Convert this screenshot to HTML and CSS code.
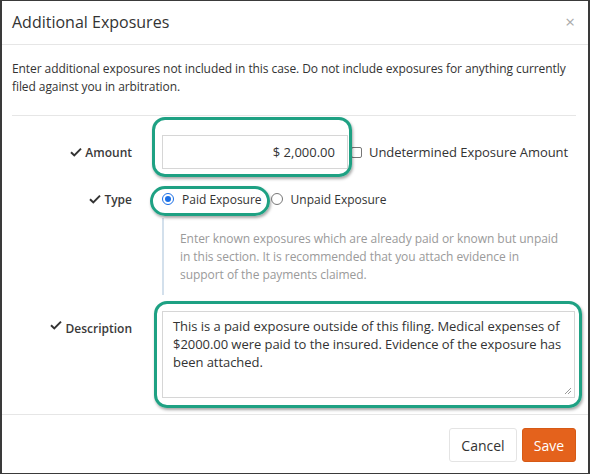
FILE: index.html
```html
<!DOCTYPE html>
<html>
<head>
<meta charset="utf-8">
<link rel="stylesheet" href="styles.css">
</head>
<body>
<div class="frame">
  <div class="header">
    <div class="title">Additional Exposures</div>
    <div class="close">×</div>
  </div>
  <div class="body">
    <p class="intro">Enter additional exposures not included in this case. Do not include exposures for anything currently filed against you in arbitration.</p>
    <div class="rule"></div>
    <div class="form">
      <div class="label row-amount"><svg class="check" viewBox="0 0 12 10"><path d="M1 5.2 L4.3 8.4 L11 1.6" fill="none" stroke="#333" stroke-width="2"/></svg>Amount</div>
      <div class="control row-amount">
        <span class="hl hl-amount"><span class="input">$ 2,000.00</span></span>
        <span class="checkbox"></span>
        <span class="cb-label">Undetermined Exposure Amount</span>
      </div>

      <div class="label row-type"><svg class="check" viewBox="0 0 12 10"><path d="M1 5.2 L4.3 8.4 L11 1.6" fill="none" stroke="#333" stroke-width="2"/></svg>Type</div>
      <div class="control row-type">
        <span class="hl hl-type"><span class="radio checked"></span><span class="radio-label">Paid Exposure</span></span>
        <span class="radio second"></span><span class="radio-label">Unpaid Exposure</span>
      </div>

      <div class="spacer"></div>
      <div class="help">Enter known exposures which are already paid or known but unpaid in this section. It is recommended that you attach evidence in support of the payments claimed.</div>

      <div class="label row-desc"><svg class="check" viewBox="0 0 12 10"><path d="M1 5.2 L4.3 8.4 L11 1.6" fill="none" stroke="#333" stroke-width="2"/></svg>Description</div>
      <div class="control row-desc">
        <span class="hl hl-desc"><span class="textarea">This is a paid exposure outside of this filing. Medical expenses of $2000.00 were paid to the insured. Evidence of the exposure has been attached.<svg class="grip" viewBox="0 0 8 8"><path d="M7 1 L1 7 M7 4 L4 7" stroke="#999" stroke-width="1"/></svg></span></span>
      </div>
    </div>
  </div>
  <div class="footer">
    <span class="btn cancel">Cancel</span>
    <span class="btn save">Save</span>
  </div>
</div>
</body>
</html>
```

FILE: styles.css
```css
html, body {
  margin: 0;
  padding: 0;
  background: #fff;
}
body {
  font-family: "Open Sans", "Noto Sans", sans-serif;
  color: #333;
}
.frame {
  width: 590px;
  height: 474px;
  box-sizing: border-box;
  border-style: solid;
  border-color: #3a3a3a;
  border-width: 1px 2px 1px 2px;
  display: flex;
  flex-direction: column;
  background: #fff;
}
.header {
  height: 44px;
  flex: none;
  border-bottom: 1px solid #e6e6e6;
  display: flex;
  align-items: center;
  justify-content: space-between;
  padding: 0 13px 2px 10px;
  box-sizing: border-box;
}
.title {
  font-size: 16px;
  color: #333;
}
.close {
  font-size: 17px;
  color: #aaa;
  line-height: 1;
}
.body {
  flex: 1;
  padding: 15px 12px 0 10px;
}
.intro {
  margin: 0;
  font-size: 12px;
  line-height: 18px;
  color: #333;
  letter-spacing: -0.08px;
}
.rule {
  height: 0;
  border-top: 1px solid #e6e6e6;
  margin-top: 19px;
}
.form {
  display: grid;
  grid-template-columns: 120px 1fr;
  column-gap: 30px;
  padding-top: 19px;
}
.label {
  display: flex;
  justify-content: flex-end;
  align-items: center;
  font-size: 12px;
  font-weight: 600;
  color: #3a3a3a;
}
.check {
  width: 12px;
  height: 10px;
  margin-right: 3px;
}
.control {
  display: flex;
  align-items: center;
  font-size: 13px;
}
.row-amount { height: 34px; }
.row-type { height: 20px; margin-top: 20px; }
.label.row-desc { align-items: flex-start; padding-top: 9px; }
.row-desc { margin-top: 16px; }

.hl {
  position: relative;
  display: inline-flex;
  align-items: center;
}
.hl::after {
  content: "";
  position: absolute;
  border: 3px solid #1ea183;
  border-radius: 13px;
  box-shadow: 1px 2px 3px rgba(0, 0, 0, 0.35);
  pointer-events: none;
}
.hl-amount::after { top: -18px; left: -10px; right: -4px; bottom: -8px; }
.hl-type::after { top: -5px; left: -12px; right: -8px; bottom: -8px; border-radius: 15px; }
.hl-desc::after { top: -10px; left: -8px; right: -7px; bottom: -10px; }

.input {
  box-sizing: border-box;
  width: 186px;
  height: 34px;
  border: 1px solid #d6d6d6;
  display: flex;
  align-items: center;
  justify-content: flex-end;
  padding-right: 12px;
  font-size: 13px;
  color: #333;
}
.checkbox {
  box-sizing: border-box;
  width: 11px;
  height: 11px;
  border: 1px solid #777;
  border-radius: 2px;
  margin-left: 3px;
  margin-right: 7px;
}
.cb-label {
  font-size: 13px;
  color: #333;
  letter-spacing: -0.05px;
}
.radio {
  box-sizing: border-box;
  width: 12px;
  height: 12px;
  border: 1px solid #777;
  border-radius: 50%;
  position: relative;
  flex: none;
}
.radio.checked {
  border-color: #1a6fe6;
}
.radio.checked::before {
  content: "";
  position: absolute;
  left: 2px;
  top: 2px;
  width: 6px;
  height: 6px;
  border-radius: 50%;
  background: #1a6fe6;
}
.radio.second {
  margin-left: 9px;
}
.radio-label {
  font-size: 12px;
  margin-left: 8px;
  color: #333;
}
.spacer { height: 1px; }
.help {
  margin-top: 9px;
  border-left: 2px solid #d3e0ec;
  padding: 12px 12px 11px 16px;
  font-size: 12px;
  line-height: 18px;
  color: #9a9a9a;
  letter-spacing: -0.05px;
}
.textarea {
  position: relative;
  box-sizing: border-box;
  display: block;
  width: 413px;
  height: 87px;
  border: 1px solid #d6d6d6;
  padding: 5px 4px 0 10px;
  font-size: 13px;
  line-height: 18px;
  color: #333;
  letter-spacing: -0.05px;
}
.grip {
  position: absolute;
  right: 2px;
  bottom: 2px;
  width: 8px;
  height: 8px;
}
.footer {
  flex: none;
  box-sizing: border-box;
  height: 59px;
  border-top: 1px solid #e6e6e6;
  display: flex;
  justify-content: flex-end;
  align-items: flex-start;
  padding: 13px 12px 0 0;
  gap: 5px;
}
.btn {
  box-sizing: border-box;
  height: 34px;
  display: inline-flex;
  align-items: center;
  justify-content: center;
  font-size: 14px;
  border-radius: 3px;
}
.cancel {
  width: 68px;
  border: 1px solid #e4e4e4;
  color: #333;
  background: #fff;
}
.save {
  width: 54px;
  background: #e4621c;
  color: #fff;
  border: 1px solid #d65a16;
}
```
